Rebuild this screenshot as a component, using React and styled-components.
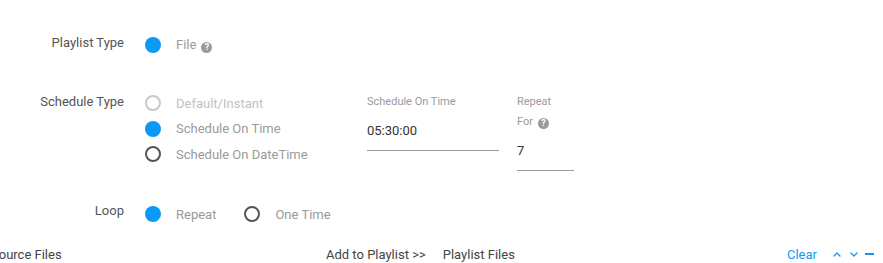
import React from "react";
import styled, { createGlobalStyle } from "styled-components";
import { ChevronUp, ChevronDown } from "lucide-react";

const Global = createGlobalStyle`
  html, body { margin: 0; padding: 0; background: #fff; overflow: hidden; }
  body { font-family: Roboto, "Noto Sans", Arial, sans-serif; }
`;

const BLUE = "#0a9af5";

const Page = styled.div`
  width: 883px;
  height: 263px;
  overflow: hidden;
  padding-top: 32px;
  box-sizing: border-box;
`;

const FormRow = styled.div`
  display: grid;
  grid-template-columns: 124px 1fr;
  column-gap: 21px;
  align-items: start;
  margin-top: ${(p) => p.$mt || 0}px;
`;

const Label = styled.div`
  text-align: right;
  font-size: 13px;
  line-height: 21px;
  color: #555;
  margin-top: ${(p) => p.$mt || 0}px;
`;

const Controls = styled.div`
  display: flex;
  align-items: flex-start;
`;

const RadioGroup = styled.div`
  display: flex;
  flex-direction: ${(p) => (p.$row ? "row" : "column")};
  gap: ${(p) => (p.$row ? "28px" : "0")};
  width: ${(p) => (p.$width ? p.$width + "px" : "auto")};
`;

const Option = styled.label`
  display: flex;
  align-items: center;
  height: 25.5px;
  gap: 15px;
  font-size: 13px;
  color: ${(p) => (p.$disabled ? "#c2c2c2" : "#9a9a9a")};
`;

const Radio = styled.span`
  width: 16px;
  height: 16px;
  box-sizing: border-box;
  border-radius: 50%;
  flex: none;
  background: ${(p) => (p.$checked ? BLUE : "#fff")};
  border: ${(p) =>
    p.$checked ? "none" : `2px solid ${p.$disabled ? "#c8c8c8" : "#555"}`};
`;

const Help = styled.span`
  display: inline-flex;
  align-items: center;
  justify-content: center;
  width: 11px;
  height: 11px;
  border-radius: 50%;
  background: #9a9a9a;
  color: #fff;
  font-size: 9px;
  font-weight: 700;
  line-height: 1;
  margin-left: 5px;
  vertical-align: -1px;
`;

const Field = styled.div`
  display: flex;
  flex-direction: column;
  width: ${(p) => p.$width}px;
  margin-left: ${(p) => p.$ml || 0}px;
  margin-top: 1px;
`;

const FieldLabel = styled.div`
  font-size: 11px;
  line-height: 20px;
  color: #9a9a9a;
`;

const Input = styled.input`
  display: block;
  width: 100%;
  height: 39px;
  box-sizing: border-box;
  border: none;
  border-bottom: 1px solid #999;
  padding: 0;
  margin: 0;
  font-family: Roboto, Arial, sans-serif;
  font-size: 13px;
  color: #333;
  background: transparent;
  outline: none;
`;

const BottomBar = styled.div`
  display: flex;
  align-items: center;
  margin-top: 17px;
  margin-left: -9px;
  height: 20px;
  font-size: 13px;
  color: #444;
`;

const PanelTitle = styled.div`
  width: ${(p) => (p.$width ? p.$width + "px" : "auto")};
  flex: none;
`;

const AddButton = styled.span`
  flex: none;
  margin-right: 17px;
`;

const RightPanel = styled.div`
  flex: 1;
  display: flex;
  align-items: center;
  padding-right: 9px;
`;

const Actions = styled.div`
  margin-left: auto;
  display: flex;
  align-items: center;
  color: ${BLUE};
`;

const ClearLink = styled.span`
  margin-right: 14px;
`;

const IconBtn = styled.span`
  display: inline-flex;
  width: 12px;
  justify-content: center;
  margin-left: ${(p) => p.$ml || 0}px;
`;

const MinusBar = styled.span`
  display: inline-block;
  width: 9px;
  height: 2px;
  background: ${BLUE};
  margin-left: 5px;
`;

export default function App() {
  return (
    <Page>
      <Global />
      <FormRow>
        <Label>Playlist Type</Label>
        <Controls>
          <RadioGroup>
            <Option>
              <Radio $checked />
              <span>
                File<Help>?</Help>
              </span>
            </Option>
          </RadioGroup>
        </Controls>
      </FormRow>

      <FormRow $mt={33}>
        <Label>Schedule Type</Label>
        <Controls>
          <RadioGroup $width={222}>
            <Option $disabled>
              <Radio $disabled />
              <span>Default/Instant</span>
            </Option>
            <Option>
              <Radio $checked />
              <span>Schedule On Time</span>
            </Option>
            <Option>
              <Radio />
              <span>Schedule On DateTime</span>
            </Option>
          </RadioGroup>
          <Field $width={132}>
            <FieldLabel>Schedule On Time</FieldLabel>
            <Input readOnly value="05:30:00" />
          </Field>
          <Field $width={57} $ml={18}>
            <FieldLabel>
              Repeat
              <br />
              For<Help>?</Help>
            </FieldLabel>
            <Input readOnly value="7" />
          </Field>
        </Controls>
      </FormRow>

      <FormRow $mt={31}>
        <Label $mt={-2}>Loop</Label>
        <Controls>
          <RadioGroup $row>
            <Option>
              <Radio $checked />
              <span>Repeat</span>
            </Option>
            <Option>
              <Radio />
              <span>One Time</span>
            </Option>
          </RadioGroup>
        </Controls>
      </FormRow>

      <BottomBar>
        <PanelTitle $width={335}>Source Files</PanelTitle>
        <AddButton>Add to Playlist &gt;&gt;</AddButton>
        <RightPanel>
          <PanelTitle>Playlist Files</PanelTitle>
          <Actions>
            <ClearLink>Clear</ClearLink>
            <IconBtn>
              <ChevronUp size={13} strokeWidth={2.5} />
            </IconBtn>
            <IconBtn $ml={5}>
              <ChevronDown size={13} strokeWidth={2.5} />
            </IconBtn>
            <MinusBar />
          </Actions>
        </RightPanel>
      </BottomBar>
    </Page>
  );
}
